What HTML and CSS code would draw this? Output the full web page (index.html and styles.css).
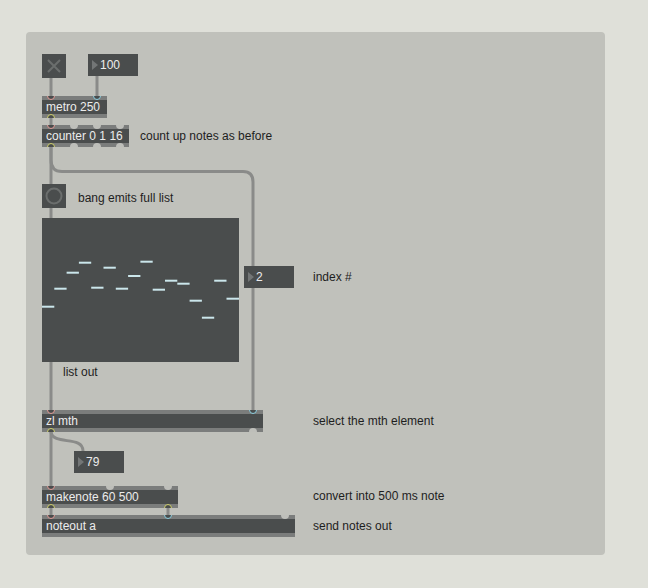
FILE: index.html
```html
<!DOCTYPE html>
<html>
<head>
<meta charset="utf-8">
<link rel="stylesheet" href="styles.css">
</head>
<body>
<div class="patcher">
  <svg class="cords" width="579" height="523" viewBox="0 0 579 523">
    <g fill="none" stroke="#8a8b89" stroke-width="3" stroke-linecap="round">
      <path d="M25 46 L25 64"/>
      <path d="M71 43 L71 64"/>
      <path d="M25 86 L25 93"/>
      <path d="M25 115 L25 152"/>
      <path d="M25 115 L25 128 Q25 139.5 36 139.5 L217 139.5 Q227 139.5 227 150 L227 378"/>
      <path d="M25 176 L25 186"/>
      <path d="M25 330 L25 378"/>
      <path d="M25 400 L25 454"/>
      <path d="M25 400 C27 414, 57 403, 57 419"/>
      <path d="M25 476 L25 483"/>
      <path d="M142 476 L142 483"/>
    </g>
  </svg>

  <div class="toggle node" style="left:16px;top:22px">
    <svg width="24" height="24" viewBox="0 0 24 24"><path d="M6 6 L18 18 M18 6 L6 18" stroke="#6b6e6d" stroke-width="2"/></svg>
  </div>
  <div class="num node" style="left:62px;top:22px"><span class="tri"></span>100</div>

  <div class="obj node" style="left:16px;top:64px;width:65px">metro 250
    <span class="port in hot" style="left:5px"></span>
    <span class="port in cold" style="left:51px"></span>
    <span class="port out conn" style="left:5px"></span>
  </div>

  <div class="obj node" style="left:16px;top:93px;width:87px">counter 0 1 16
    <span class="port in hot" style="left:5px"></span>
    <span class="port in notch" style="left:28px"></span>
    <span class="port in notch" style="left:51px"></span>
    <span class="port in notch" style="left:74px"></span>
    <span class="port out conn" style="left:5px"></span>
    <span class="port out notch" style="left:28px"></span>
    <span class="port out notch" style="left:51px"></span>
    <span class="port out notch" style="left:74px"></span>
  </div>
  <div class="comment node" style="left:114px;top:93px">count up notes as before</div>

  <div class="bang node" style="left:16px;top:152px">
    <svg width="24" height="24" viewBox="0 0 24 24"><circle cx="12" cy="12" r="7.5" fill="none" stroke="#6b6e6d" stroke-width="2"/></svg>
  </div>
  <div class="comment node" style="left:52px;top:155px">bang emits full list</div>

  <div class="multislider node" style="left:16px;top:186px">
    <svg width="197" height="144" viewBox="0 0 197 144">
      <g fill="#cbe6eb">
        <rect x="0" y="87.7" width="12.3" height="2"/>
        <rect x="12.3" y="69.7" width="12.3" height="2"/>
        <rect x="24.6" y="53.7" width="12.3" height="2"/>
        <rect x="36.9" y="43.7" width="12.3" height="2"/>
        <rect x="49.2" y="68.7" width="12.3" height="2"/>
        <rect x="61.5" y="48.7" width="12.3" height="2"/>
        <rect x="73.8" y="69.7" width="12.3" height="2"/>
        <rect x="86.1" y="57" width="12.3" height="2"/>
        <rect x="98.4" y="42.7" width="12.3" height="2"/>
        <rect x="110.7" y="70.7" width="12.3" height="2"/>
        <rect x="123" y="61.7" width="12.3" height="2"/>
        <rect x="135.3" y="64.7" width="12.3" height="2"/>
        <rect x="147.6" y="81.7" width="12.3" height="2"/>
        <rect x="159.9" y="98.7" width="12.3" height="2"/>
        <rect x="172.2" y="61.7" width="12.3" height="2"/>
        <rect x="184.5" y="79.7" width="12.5" height="2"/>
      </g>
    </svg>
  </div>

  <div class="num node" style="left:218px;top:234px"><span class="tri"></span>2</div>
  <div class="comment node" style="left:287px;top:234px">index #</div>

  <div class="comment node" style="left:37px;top:329px">list out</div>

  <div class="obj node" style="left:16px;top:378px;width:221px">zl mth
    <span class="port in hot" style="left:5px"></span>
    <span class="port in cold" style="left:207px"></span>
    <span class="port out conn" style="left:5px"></span>
    <span class="port out notch" style="left:207px"></span>
  </div>
  <div class="comment node" style="left:287px;top:378px">select the mth element</div>

  <div class="num node" style="left:48px;top:419px"><span class="tri"></span>79</div>

  <div class="obj node" style="left:16px;top:454px;width:136px">makenote 60 500
    <span class="port in hot" style="left:5px"></span>
    <span class="port in notch" style="left:64px"></span>
    <span class="port in notch" style="left:122px"></span>
    <span class="port out conn" style="left:5px"></span>
    <span class="port out conn" style="left:122px"></span>
  </div>
  <div class="comment node" style="left:287px;top:453px">convert into 500 ms note</div>

  <div class="obj node" style="left:16px;top:483px;width:253px">noteout a
    <span class="port in hot" style="left:5px"></span>
    <span class="port in cold" style="left:122px"></span>
    <span class="port in notch" style="left:239px"></span>
  </div>
  <div class="comment node" style="left:287px;top:483px">send notes out</div>
</div>
</body>
</html>
```

FILE: styles.css
```css
html, body {
  margin: 0;
  padding: 0;
}
body {
  background: #dfe0d9;
  padding: 32px 0 0 26px;
  width: 648px;
  height: 588px;
  box-sizing: border-box;
  font-family: "Liberation Sans", Arial, sans-serif;
  font-size: 12px;
}
.patcher {
  position: relative;
  width: 579px;
  height: 523px;
  background: #c0c1bb;
  border-radius: 4px;
}
.cords {
  position: absolute;
  left: 0;
  top: 0;
}
.node {
  position: absolute;
  box-sizing: border-box;
}
.toggle, .bang {
  width: 24px;
  height: 24px;
  background: #4a4d4d;
}
.toggle svg, .bang svg {
  display: block;
}
.num {
  width: 50px;
  height: 22px;
  background: #4a4d4d;
  color: #ececec;
  line-height: 22px;
  padding-left: 12px;
  white-space: nowrap;
}
.tri {
  position: absolute;
  left: 4px;
  top: 6px;
  width: 0;
  height: 0;
  border-left: 6px solid #737676;
  border-top: 5px solid transparent;
  border-bottom: 5px solid transparent;
}
.obj {
  height: 22px;
  padding: 4px 0 4px 4px;
  line-height: 14px;
  color: #ececec;
  white-space: nowrap;
  overflow: hidden;
  background: linear-gradient(#7b7d7c 0 4px, #4a4d4d 4px 18px, #7b7d7c 18px 22px);
}
.port {
  position: absolute;
  width: 8px;
  height: 8px;
  border-radius: 50%;
  box-sizing: border-box;
}
.port.in { top: -4px; }
.port.out { bottom: -4px; }
.port.hot { border: 1.5px solid #e39c98; background: #4a4d4d; }
.port.cold { border: 1.5px solid #8dd0e1; background: #4a4d4d; }
.port.conn { border: 1.5px solid #cfd06b; background: #4a4d4d; }
.port.notch { background: #bebfba; }
.comment {
  color: #1e1e1e;
  line-height: 22px;
  white-space: nowrap;
}
.multislider {
  width: 197px;
  height: 144px;
  background: #4a4d4d;
}
.multislider svg {
  display: block;
}
```
